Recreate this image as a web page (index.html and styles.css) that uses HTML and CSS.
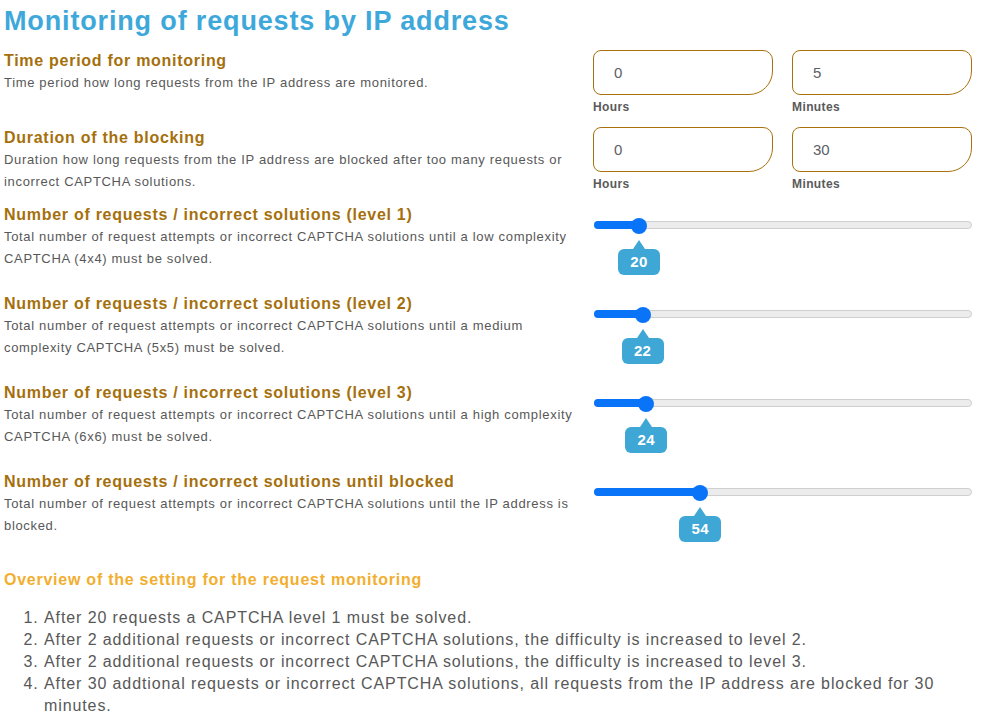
FILE: index.html
```html
<!DOCTYPE html>
<html lang="en">
<head>
<meta charset="utf-8">
<title>Monitoring of requests by IP address</title>
<link rel="stylesheet" href="styles.css">
</head>
<body>
<div class="page">
  <h1 class="title">Monitoring of requests by IP address</h1>

  <div class="row">
    <div class="info">
      <h2 class="heading">Time period for monitoring</h2>
      <p class="desc">Time period how long requests from the IP address are monitored.</p>
    </div>
    <div class="pair">
      <div class="field"><div class="box">0</div><div class="unit">Hours</div></div>
      <div class="field"><div class="box">5</div><div class="unit">Minutes</div></div>
    </div>
  </div>

  <div class="row">
    <div class="info">
      <h2 class="heading">Duration of the blocking</h2>
      <p class="desc">Duration how long requests from the IP address are blocked after too many requests or incorrect CAPTCHA solutions.</p>
    </div>
    <div class="pair">
      <div class="field"><div class="box">0</div><div class="unit">Hours</div></div>
      <div class="field"><div class="box">30</div><div class="unit">Minutes</div></div>
    </div>
  </div>

  <div class="row row-slider">
    <div class="info">
      <h2 class="heading">Number of requests / incorrect solutions (level 1)</h2>
      <p class="desc">Total number of request attempts or incorrect CAPTCHA solutions until a low complexity CAPTCHA (4x4) must be solved.</p>
    </div>
    <div class="slider">
      <div class="track" style="--p:0.10">
        <div class="fill"></div>
        <div class="thumb"></div>
        <div class="badge">20</div>
      </div>
    </div>
  </div>

  <div class="row row-slider">
    <div class="info">
      <h2 class="heading">Number of requests / incorrect solutions (level 2)</h2>
      <p class="desc">Total number of request attempts or incorrect CAPTCHA solutions until a medium complexity CAPTCHA (5x5) must be solved.</p>
    </div>
    <div class="slider">
      <div class="track" style="--p:0.11">
        <div class="fill"></div>
        <div class="thumb"></div>
        <div class="badge">22</div>
      </div>
    </div>
  </div>

  <div class="row row-slider">
    <div class="info">
      <h2 class="heading">Number of requests / incorrect solutions (level 3)</h2>
      <p class="desc">Total number of request attempts or incorrect CAPTCHA solutions until a high complexity CAPTCHA (6x6) must be solved.</p>
    </div>
    <div class="slider">
      <div class="track" style="--p:0.12">
        <div class="fill"></div>
        <div class="thumb"></div>
        <div class="badge">24</div>
      </div>
    </div>
  </div>

  <div class="row row-slider">
    <div class="info">
      <h2 class="heading">Number of requests / incorrect solutions until blocked</h2>
      <p class="desc">Total number of request attempts or incorrect CAPTCHA solutions until the IP address is blocked.</p>
    </div>
    <div class="slider">
      <div class="track" style="--p:0.27">
        <div class="fill"></div>
        <div class="thumb"></div>
        <div class="badge">54</div>
      </div>
    </div>
  </div>

  <h3 class="overview">Overview of the setting for the request monitoring</h3>
  <ol class="steps">
    <li>After 20 requests a CAPTCHA level 1 must be solved.</li>
    <li>After 2 additional requests or incorrect CAPTCHA solutions, the difficulty is increased to level 2.</li>
    <li>After 2 additional requests or incorrect CAPTCHA solutions, the difficulty is increased to level 3.</li>
    <li>After 30 addtional requests or incorrect CAPTCHA solutions, all requests from the IP address are blocked for 30 minutes.</li>
  </ol>
</div>
</body>
</html>
```

FILE: styles.css
```css
* { box-sizing: border-box; }

html, body {
  margin: 0;
  padding: 0;
  background: #ffffff;
}

body {
  font-family: "Liberation Sans", Arial, sans-serif;
  color: #585858;
}

.page {
  width: 976px;
  padding: 4px 0 0 4px;
}

.title {
  margin: 0 0 12px 0;
  font-size: 27px;
  line-height: 34px;
  font-weight: 700;
  letter-spacing: 0.85px;
  color: #3ea8db;
}

.row {
  display: grid;
  grid-template-columns: 572px 380px;
  column-gap: 17px;
  align-items: start;
  margin-bottom: 10px;
}

.heading {
  margin: 0;
  font-size: 16px;
  line-height: 22px;
  font-weight: 700;
  letter-spacing: 0.72px;
  color: #a5700c;
}

.desc {
  margin: 0;
  font-size: 13px;
  line-height: 22px;
  letter-spacing: 0.67px;
  color: #585858;
}

.pair {
  display: grid;
  grid-template-columns: 180px 180px;
  column-gap: 19px;
  height: 67px;
}

.field { display: flex; flex-direction: column; }

.box {
  height: 45px;
  border: 1px solid #a8710f;
  border-radius: 8px 10px 24px 8px;
  padding-left: 20px;
  display: flex;
  align-items: center;
  font-size: 15px;
  color: #5b5f66;
}

.unit {
  margin-top: 4px;
  font-size: 12px;
  line-height: 16px;
  font-weight: 700;
  color: #5a5a5a;
  letter-spacing: 0.4px;
}

.slider {
  height: 79px;
  padding-top: 17px;
  padding-left: 1px;
}

.track {
  position: relative;
  height: 8px;
  background: #ececec;
  border: 1px solid #cfcfcf;
  border-radius: 4px;
  width: 378px;
}

.fill {
  position: absolute;
  left: -1px;
  top: -1px;
  bottom: -1px;
  width: calc(8px + (100% - 16px) * var(--p));
  background: #0a74f9;
  border-radius: 4px 0 0 4px;
}

.thumb {
  position: absolute;
  top: -4px;
  left: calc(8px + (100% - 16px) * var(--p));
  width: 16px;
  height: 16px;
  margin-left: -8px;
  border-radius: 50%;
  background: #0a74f9;
}

.badge {
  position: absolute;
  top: 27px;
  left: calc(8px + (100% - 16px) * var(--p));
  transform: translateX(-50%);
  min-width: 42px;
  height: 26px;
  padding: 0 8px;
  border-radius: 6px;
  background: #3fa7d6;
  color: #ffffff;
  font-size: 15px;
  font-weight: 700;
  line-height: 26px;
  text-align: center;
  letter-spacing: 0.3px;
}

.badge::before {
  content: "";
  position: absolute;
  left: 50%;
  top: -9px;
  margin-left: -6px;
  border-left: 6px solid transparent;
  border-right: 6px solid transparent;
  border-bottom: 9px solid #3fa7d6;
}

.overview {
  margin: 19px 0 16px 0;
  font-size: 16px;
  line-height: 22px;
  font-weight: 700;
  letter-spacing: 0.75px;
  color: #f2ae2f;
}

.steps {
  margin: 0;
  padding-left: 40px;
  font-size: 16px;
  line-height: 22px;
  letter-spacing: 0.9px;
  color: #585858;
}
```
